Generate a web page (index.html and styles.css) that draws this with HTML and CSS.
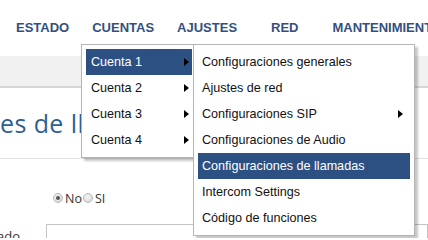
FILE: index.html
```html
<!DOCTYPE html>
<html lang="es">
<head>
<meta charset="utf-8">
<title>Configuraciones de llamadas</title>
<link rel="stylesheet" href="styles.css">
</head>
<body>
<header class="topnav">
  <ul class="nav">
    <li class="nav-item">ESTADO</li>
    <li class="nav-item nav-item--open">CUENTAS
      <div class="dropdown">
        <ul class="menu menu--accounts">
          <li class="menu-item menu-item--active has-sub">Cuenta 1<span class="caret"></span></li>
          <li class="menu-item has-sub">Cuenta 2<span class="caret"></span></li>
          <li class="menu-item has-sub">Cuenta 3<span class="caret"></span></li>
          <li class="menu-item has-sub">Cuenta 4<span class="caret"></span></li>
        </ul>
        <ul class="menu menu--sub">
          <li class="menu-item">Configuraciones generales</li>
          <li class="menu-item">Ajustes de red</li>
          <li class="menu-item has-sub">Configuraciones SIP<span class="caret"></span></li>
          <li class="menu-item">Configuraciones de Audio</li>
          <li class="menu-item menu-item--active">Configuraciones de llamadas</li>
          <li class="menu-item">Intercom Settings</li>
          <li class="menu-item">Código de funciones</li>
        </ul>
      </div>
    </li>
    <li class="nav-item">AJUSTES</li>
    <li class="nav-item">RED</li>
    <li class="nav-item">MANTENIMIENTO</li>
  </ul>
</header>
<div class="subbar"></div>
<main class="content">
  <h1 class="page-title">es de llamadas</h1>
  <div class="radio-row">
    <span class="radio radio--checked"></span><span class="radio-label">No</span>
    <span class="radio"></span><span class="radio-label">SI</span>
  </div>
  <div class="field-row">
    <span class="field-label">ado</span>
    <div class="field-input"></div>
  </div>
</main>
</body>
</html>
```
FILE: styles.css
```css
html, body {
  margin: 0;
  padding: 0;
  background: #fff;
  overflow: hidden;
  height: 238px;
}

body {
  font-family: "Liberation Sans", Arial, sans-serif;
}

.topnav {
  height: 56px;
  position: relative;
  z-index: 5;
}

.nav {
  list-style: none;
  margin: 0;
  padding: 0 0 0 4.5px;
  display: flex;
  white-space: nowrap;
}

.nav-item {
  position: relative;
  flex-shrink: 0;
  padding: 0 11.5px;
  min-width: 72.4px;
  box-sizing: border-box;
  text-align: center;
  line-height: 56px;
  font-size: 13px;
  font-weight: bold;
  color: #33507f;
}

.dropdown {
  position: absolute;
  top: 44px;
  left: 0.3px;
  text-align: left;
  font-weight: normal;
}

.menu {
  list-style: none;
  margin: 0;
  padding: 4px;
  background: #fff;
  border: 1px solid #b4b4b4;
  box-shadow: 3px 3px 2px rgba(0, 0, 0, 0.22);
}

.menu--accounts {
  width: 106px;
}

.menu--sub {
  position: absolute;
  top: 0;
  left: 112px;
  width: 212px;
}

.menu-item {
  position: relative;
  height: 26px;
  line-height: 26px;
  padding-left: 5px;
  font-size: 12.6px;
  color: #111;
}

.menu--sub .menu-item {
  padding-left: 4px;
}

.menu-item--active {
  background: #2d5083;
  color: #fff;
}

.caret {
  position: absolute;
  top: 8.5px;
  right: 3px;
  width: 0;
  height: 0;
  border-left: 5px solid #000;
  border-top: 4.5px solid transparent;
  border-bottom: 4.5px solid transparent;
}

.menu--sub .caret {
  right: 7px;
}

.subbar {
  height: 30px;
  background: #f1f1f1;
  border-bottom: 2px solid #d6d6d6;
}

.content {
  font-family: "Open Sans", "Liberation Sans", sans-serif;
}

.page-title {
  margin: 17px 0 0;
  padding-bottom: 17px;
  font-size: 25px;
  line-height: 36px;
  letter-spacing: 0.4px;
  font-weight: normal;
  color: #2d5f97;
  border-bottom: 1px solid #e2e2e2;
  white-space: nowrap;
}

.radio-row {
  margin-top: 31px;
  height: 16px;
  padding-left: 53px;
  display: flex;
  align-items: center;
  font-size: 12.5px;
  color: #333;
}

.radio {
  width: 10px;
  height: 10px;
  border: 1px solid #b8b8b8;
  border-radius: 50%;
  box-sizing: border-box;
  background: radial-gradient(circle at 40% 35%, #f4f4f4, #d4d4d4);
  display: flex;
  align-items: center;
  justify-content: center;
}

.radio--checked::after {
  content: "";
  width: 4px;
  height: 4px;
  border-radius: 50%;
  background: #555;
}

.radio-label {
  margin: 0 1px 0 2px;
}

.field-row {
  margin-top: 18px;
  display: flex;
  align-items: flex-start;
}

.field-label {
  width: 51px;
  padding-top: 4px;
  margin-left: -3px;
  font-size: 13px;
  line-height: 16px;
  color: #333;
}

.field-input {
  width: 400px;
  height: 40px;
  border: 1px solid #c4c4c4;
}
```
